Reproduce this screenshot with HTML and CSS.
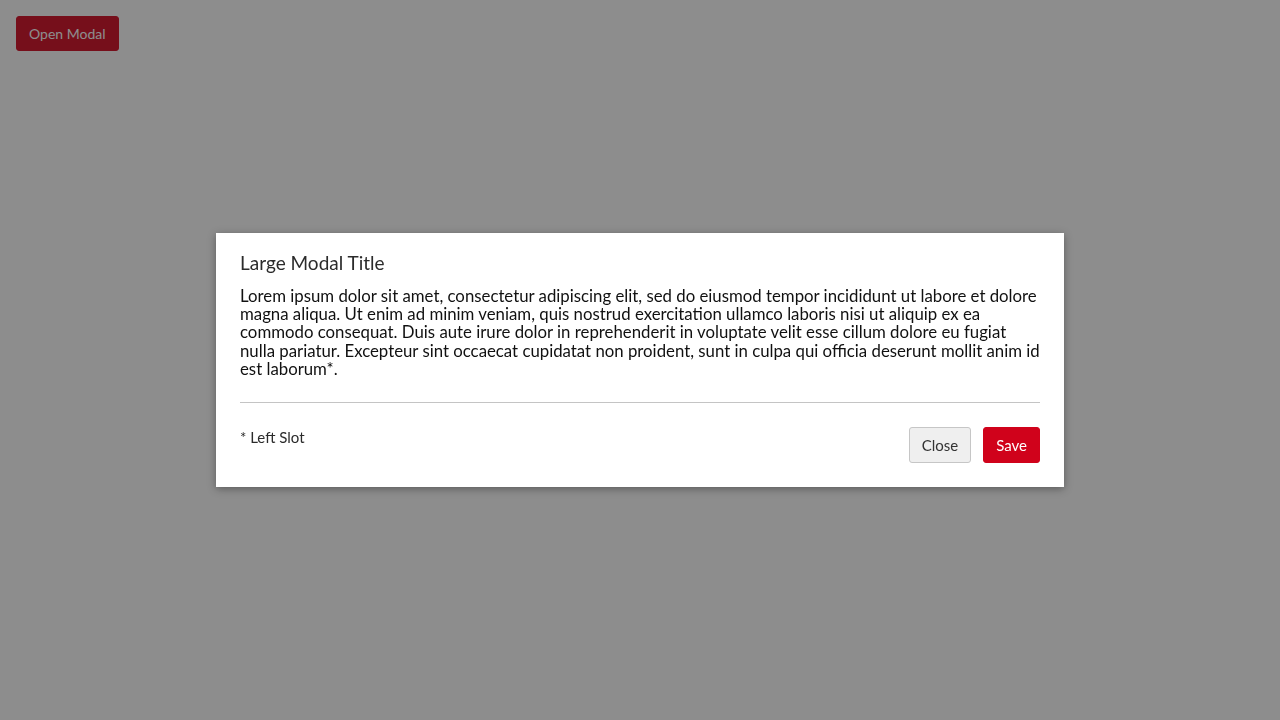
FILE: index.html
```html
<!DOCTYPE html>
<html lang="en">
<head>
<meta charset="utf-8">
<title>Modal</title>
<link rel="stylesheet" href="styles.css">
</head>
<body>
<div class="page">
  <button class="btn btn-primary open-btn">Open Modal</button>
</div>
<div class="overlay">
  <div class="modal" role="dialog" aria-labelledby="modal-title">
    <h2 class="modal-title" id="modal-title">Large Modal Title</h2>
    <p class="modal-body">Lorem ipsum dolor sit amet, consectetur adipiscing elit, sed do eiusmod tempor incididunt ut labore et dolore magna aliqua. Ut enim ad minim veniam, quis nostrud exercitation ullamco laboris nisi ut aliquip ex ea commodo consequat. Duis aute irure dolor in reprehenderit in voluptate velit esse cillum dolore eu fugiat nulla pariatur. Excepteur sint occaecat cupidatat non proident, sunt in culpa qui officia deserunt mollit anim id est laborum*.</p>
    <div class="modal-footer">
      <div class="left-slot">* Left Slot</div>
      <div class="actions">
        <button class="btn btn-secondary">Close</button>
        <button class="btn btn-primary">Save</button>
      </div>
    </div>
  </div>
</div>
</body>
</html>
```
FILE: styles.css
```css
* { box-sizing: border-box; }
html, body { margin: 0; height: 100%; }
body {
  font-family: "Lato", "Open Sans", sans-serif;
  background: #ffffff;
  color: #222;
}
.page { padding: 16px; }
.btn {
  font-family: inherit;
  font-size: 15px;
  height: 36px;
  padding: 0 12px;
  border-radius: 3px;
  border: 1px solid transparent;
  cursor: pointer;
  line-height: 1;
}
.btn-primary { background: #d0021b; color: #fff; border-color: #d0021b; }
.btn-secondary { background: #efefef; color: #333; border-color: #c6c6c6; }
.open-btn { height: 35px; padding: 0 12px; font-size: 14px; font-weight: 400; }
.overlay {
  position: fixed;
  inset: 0;
  background: rgba(27, 27, 27, 0.5);
  display: flex;
  align-items: center;
  justify-content: center;
}
.modal {
  width: 848px;
  background: #fff;
  padding: 18px 24px 24px;
  box-shadow: 0 2px 8px rgba(0, 0, 0, 0.35);
}
.modal-title {
  margin: 0 0 12px;
  font-size: 19px;
  font-weight: 400;
  line-height: 24px;
  color: #2b2b2b;
}
.modal-body {
  margin: 0;
  font-size: 16.8px;
  line-height: 18.3px;
  color: #111;
  padding-bottom: 24px;
  border-bottom: 1px solid #c4c4c4;
}
.modal-footer {
  display: flex;
  justify-content: space-between;
  align-items: flex-start;
  padding-top: 24px;
}
.left-slot { font-size: 15px; color: #2b2b2b; margin-top: 1px; }
.actions { display: flex; gap: 12px; }
```
